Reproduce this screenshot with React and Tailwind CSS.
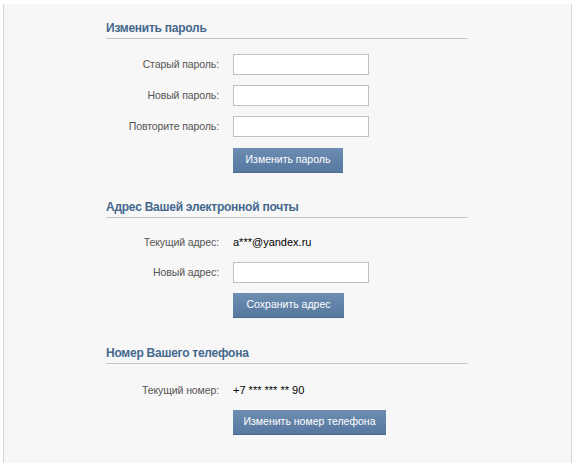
const font = { fontFamily: '"Liberation Sans", Arial, sans-serif' }

function Heading({ children, className = '' }) {
  return (
    <div className={`border-b border-[#c3c8d0] pb-[4px] h-[21px] flex items-end ${className}`}>
      <span className="text-[12px] font-bold text-[#45688e] leading-none tracking-[-0.25px]">{children}</span>
    </div>
  )
}

function Row({ label, children, className = '' }) {
  return (
    <div className={`flex items-center h-[21px] ${className}`}>
      <div className="w-[113px] text-right text-[10.5px] text-[#555] tracking-[-0.1px]">{label}</div>
      <div className="ml-[14px] flex items-center">{children}</div>
    </div>
  )
}

function Field() {
  return <input className="w-[136px] h-[21px] bg-white border border-[#c0c0c0] px-1 text-[11px] outline-none" />
}

function Button({ children, w }) {
  return (
    <button className={`h-[25px] ${w} bg-gradient-to-b from-[#6d8db2] to-[#57789f] border-b border-[#4a6a91] text-white text-[10.5px]`}>
      {children}
    </button>
  )
}

export default function App() {
  return (
    <div className="w-[573px] h-[463px] bg-white pt-[4px] pl-[3px] overflow-hidden" style={font}>
      <div className="w-[569px] h-[459px] bg-[#f7f7f7] border-l border-r border-[#d6d6d6]">
        <div className="ml-[102px] w-[362px] pt-[14px]">
          <Heading>Изменить пароль</Heading>
          <div className="mt-[15px] flex flex-col gap-[10px]">
            <Row label="Старый пароль:"><Field /></Row>
            <Row label="Новый пароль:"><Field /></Row>
            <Row label="Повторите пароль:"><Field /></Row>
          </div>
          <div className="ml-[127px] mt-[11px] flex">
            <Button w="w-[110px]">Изменить пароль</Button>
          </div>

          <Heading className="mt-[24px]">Адрес Вашей электронной почты</Heading>
          <div className="mt-[14px] flex flex-col gap-[9px]">
            <Row label="Текущий адрес:"><span className="text-[11px] text-black">a***@yandex.ru</span></Row>
            <Row label="Новый адрес:"><Field /></Row>
          </div>
          <div className="ml-[127px] mt-[10px] flex">
            <Button w="w-[111px]">Сохранить адрес</Button>
          </div>

          <Heading className="mt-[25px]">Номер Вашего телефона</Heading>
          <div className="mt-[16px]">
            <Row label="Текущий номер:"><span className="text-[11px] text-black">+7 *** *** ** 90</span></Row>
          </div>
          <div className="ml-[127px] mt-[9px] flex">
            <Button w="w-[153px]">Изменить номер телефона</Button>
          </div>
        </div>
      </div>
    </div>
  )
}
